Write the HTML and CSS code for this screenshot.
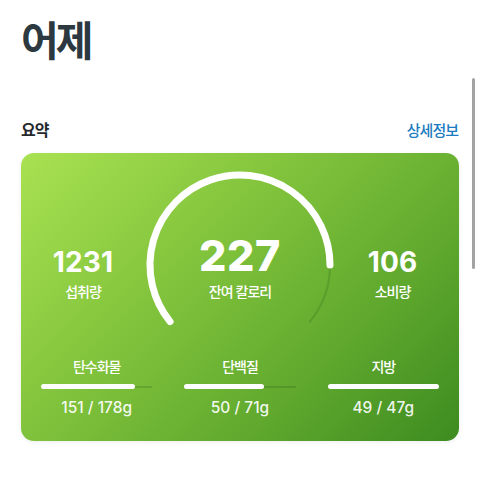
FILE: index.html
```html
<!DOCTYPE html>
<html lang="ko">
<head>
<meta charset="utf-8">
<link rel="stylesheet" href="styles.css">
</head>
<body>
<main class="page">
  <h1 class="title">어제</h1>
  <div class="section-head">
    <h2 class="section-title">요약</h2>
    <a class="more">상세정보</a>
  </div>
  <section class="card">
    <div class="top-row">
      <div class="side">
        <div class="side-num">1231</div>
        <div class="side-label">섭취량</div>
      </div>
      <div class="gauge">
        <svg class="gauge-svg" width="190" height="158" viewBox="0 0 190 158">
          <path d="M25.06 151.64 A90 90 0 1 1 164.94 151.64" fill="none" stroke="rgba(20,70,10,0.18)" stroke-width="2" stroke-linecap="round"/>
          <path d="M25.06 151.64 A90 90 0 1 1 185 95" fill="none" stroke="#ffffff" stroke-width="7" stroke-linecap="round"/>
        </svg>
        <div class="gauge-text">
          <div class="gauge-num">227</div>
          <div class="gauge-label">잔여 칼로리</div>
        </div>
      </div>
      <div class="side side-right">
        <div class="side-num">106</div>
        <div class="side-label">소비량</div>
      </div>
    </div>
    <div class="macros">
      <div class="macro">
        <div class="macro-label">탄수화물</div>
        <div class="bar"><div class="bar-fill" style="width:84.8%"></div></div>
        <div class="macro-value">151 / 178g</div>
      </div>
      <div class="macro">
        <div class="macro-label">단백질</div>
        <div class="bar"><div class="bar-fill" style="width:72%"></div></div>
        <div class="macro-value">50 / 71g</div>
      </div>
      <div class="macro">
        <div class="macro-label">지방</div>
        <div class="bar"><div class="bar-fill" style="width:100%"></div></div>
        <div class="macro-value">49 / 47g</div>
      </div>
    </div>
  </section>
</main>
<div class="scrollbar"></div>
</body>
</html>
```

FILE: styles.css
```css
* { box-sizing: border-box; }
html, body { margin: 0; padding: 0; background: #ffffff; }
body {
  font-family: Inter, "Noto Sans CJK KR", "Noto Sans", sans-serif;
  color: #1f2529;
  width: 480px;
  height: 480px;
  overflow: hidden;
}
.page { padding: 0 21px; }
.title {
  margin: 0;
  padding-top: 12px;
  font-family: "Noto Sans CJK KR", sans-serif;
  font-size: 41px;
  line-height: 52px;
  font-weight: 700;
  letter-spacing: -3px;
  color: #2d3940;
}
.section-head {
  display: flex;
  justify-content: space-between;
  align-items: baseline;
  margin-top: 54px;
}
.section-title {
  margin: 0;
  font-family: "Noto Sans CJK KR", sans-serif;
  font-size: 16px;
  line-height: 22px;
  font-weight: 700;
  letter-spacing: -1px;
  color: #24292d;
}
.more {
  font-family: "Noto Sans CJK KR", sans-serif;
  font-size: 15px;
  line-height: 22px;
  font-weight: 500;
  letter-spacing: -1px;
  color: #1c7cc0;
  margin-right: 1px;
}
.card {
  margin-top: 12px;
  height: 288px;
  border-radius: 13px;
  background: linear-gradient(135deg, #a9e252 0%, #80c23b 40%, #60a92e 70%, #3d8b20 100%);
  box-shadow: 0 1px 4px rgba(0,0,0,0.08);
  color: #ffffff;
  padding-top: 17px;
}
.top-row {
  display: grid;
  grid-template-columns: 124px 190px 115px;
}
.side {
  display: flex;
  flex-direction: column;
  align-items: center;
  padding-top: 78px;
}
.side-num {
  font-size: 28px;
  line-height: 28px;
  font-weight: 700;
  letter-spacing: 0.2px;
}
.side-label, .gauge-label, .macro-label {
  font-family: "Noto Sans CJK KR", sans-serif;
  font-size: 14px;
  line-height: 18px;
  font-weight: 500;
  letter-spacing: -1px;
}
.side-label { margin-top: 6px; }
.gauge {
  display: grid;
  height: 158px;
}
.gauge-svg, .gauge-text { grid-area: 1 / 1; }
.gauge-svg { display: block; overflow: visible; }
.gauge-text {
  display: flex;
  flex-direction: column;
  align-items: center;
  padding-top: 64px;
}
.gauge-num {
  font-size: 43px;
  line-height: 43px;
  font-weight: 800;
  letter-spacing: 0.6px;
}
.gauge-label { margin-top: 5px; }
.macros {
  display: grid;
  grid-template-columns: repeat(3, 1fr);
  column-gap: 32px;
  padding: 0 20px;
  margin-top: 29px;
}
.macro {
  display: flex;
  flex-direction: column;
  align-items: center;
}
.bar {
  width: 100%;
  height: 5px;
  margin-top: 9px;
  background: linear-gradient(rgba(0,0,0,0) 1.5px, rgba(20,70,10,0.18) 1.5px, rgba(20,70,10,0.18) 3.5px, rgba(0,0,0,0) 3.5px);
  border-radius: 3px;
}
.bar-fill {
  height: 5px;
  border-radius: 3px;
  background: #ffffff;
}
.macro-value {
  margin-top: 10px;
  font-size: 15.5px;
  line-height: 18px;
  font-weight: 500;
  color: rgba(255,255,255,0.93);
}
.scrollbar {
  position: fixed;
  left: 472px;
  top: 78px;
  width: 3px;
  height: 191px;
  border-radius: 2px;
  background: #a3a3a3;
}
```
